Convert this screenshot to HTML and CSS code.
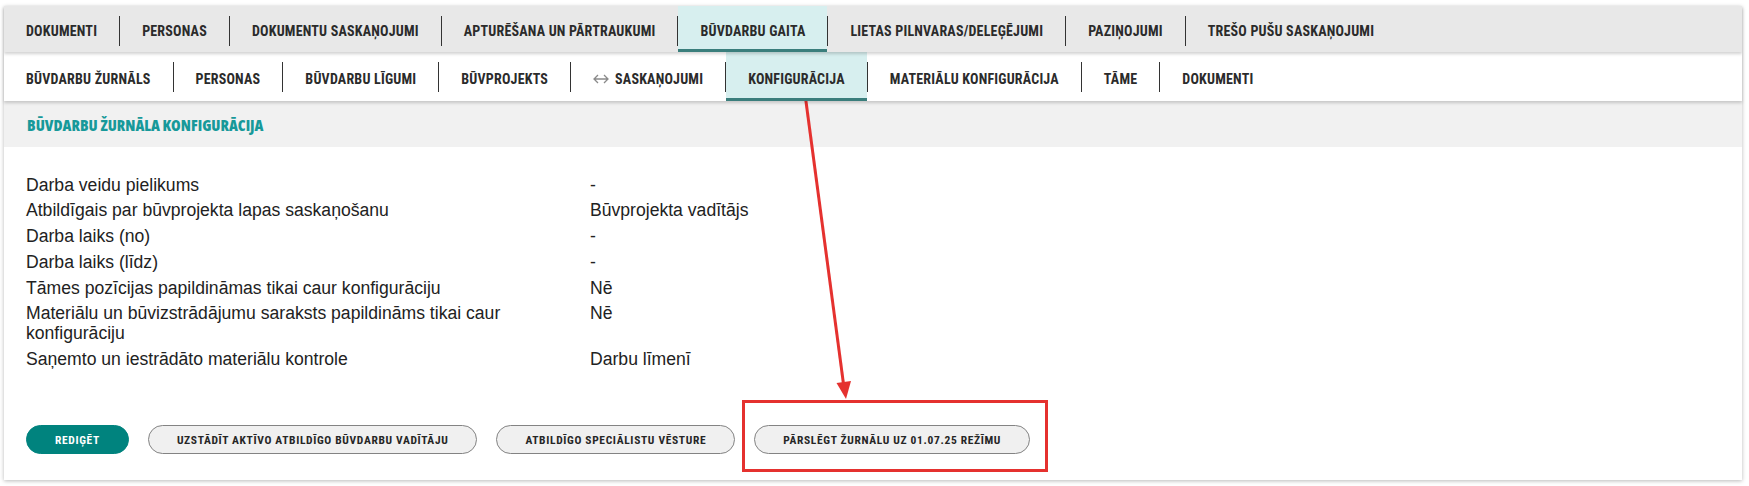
FILE: index.html
```html
<!DOCTYPE html>
<html lang="lv">
<head>
<meta charset="utf-8">
<title>Būvdarbu žurnāla konfigurācija</title>
<link rel="stylesheet" href="styles.css">
</head>
<body>
<div class="page">
  <div class="card">
    <nav class="tabs tabs-main">
      <a class="tab">Dokumenti</a><span class="sep"></span>
      <a class="tab">Personas</a><span class="sep"></span>
      <a class="tab">Dokumentu saskaņojumi</a><span class="sep"></span>
      <a class="tab">Apturēšana un pārtraukumi</a><span class="sep"></span>
      <a class="tab active">Būvdarbu gaita</a><span class="sep"></span>
      <a class="tab">Lietas pilnvaras/deleģējumi</a><span class="sep"></span>
      <a class="tab">Paziņojumi</a><span class="sep"></span>
      <a class="tab">Trešo pušu saskaņojumi</a>
    </nav>
    <nav class="tabs tabs-sub">
      <a class="tab">Būvdarbu žurnāls</a><span class="sep"></span>
      <a class="tab">Personas</a><span class="sep"></span>
      <a class="tab">Būvdarbu līgumi</a><span class="sep"></span>
      <a class="tab">Būvprojekts</a><span class="sep"></span>
      <a class="tab"><svg class="swap" width="16" height="10" viewBox="0 0 16 10" aria-hidden="true"><path d="M1 5H15M5 1L1 5L5 9M11 1L15 5L11 9" fill="none" stroke="#8a8a8a" stroke-width="1.3"/></svg>Saskaņojumi</a><span class="sep"></span>
      <a class="tab active">Konfigurācija</a><span class="sep"></span>
      <a class="tab">Materiālu konfigurācija</a><span class="sep"></span>
      <a class="tab">Tāme</a><span class="sep"></span>
      <a class="tab">Dokumenti</a>
    </nav>
    <h2 class="section-title">Būvdarbu žurnāla konfigurācija</h2>
    <div class="content">
      <dl class="props">
        <dt>Darba veidu pielikums</dt><dd>-</dd>
        <dt>Atbildīgais par būvprojekta lapas saskaņošanu</dt><dd>Būvprojekta vadītājs</dd>
        <dt>Darba laiks (no)</dt><dd>-</dd>
        <dt>Darba laiks (līdz)</dt><dd>-</dd>
        <dt>Tāmes pozīcijas papildināmas tikai caur konfigurāciju</dt><dd>Nē</dd>
        <dt>Materiālu un būvizstrādājumu saraksts papildināms tikai caur konfigurāciju</dt><dd>Nē</dd>
        <dt>Saņemto un iestrādāto materiālu kontrole</dt><dd>Darbu līmenī</dd>
      </dl>
      <div class="actions">
        <button class="btn btn-primary">Rediģēt</button>
        <button class="btn">Uzstādīt aktīvo atbildīgo būvdarbu vadītāju</button>
        <button class="btn">Atbildīgo speciālistu vēsture</button>
        <button class="btn">Pārslēgt žurnālu uz 01.07.25 režīmu</button>
      </div>
    </div>
  </div>
</div>
<svg class="annotation" width="1749" height="486" viewBox="0 0 1749 486" aria-hidden="true">
  <line x1="805" y1="94" x2="843.5" y2="384" stroke="#e5312f" stroke-width="3"/>
  <polygon points="836.5,383 851,381 846,399" fill="#e5312f"/>
  <rect x="743.5" y="401.5" width="303" height="69" fill="none" stroke="#e5312f" stroke-width="3"/>
</svg>
</body>
</html>
```
FILE: styles.css
```css
html, body {
  margin: 0;
  padding: 0;
  background: #fff;
}
body {
  position: relative;
  width: 1749px;
  height: 486px;
  overflow: hidden;
  font-family: "Liberation Sans", Arial, sans-serif;
  color: #222;
}
.page {
  padding: 6px 7px 4px 4px;
}
.card {
  background: #fff;
  box-shadow: 0 1px 4px rgba(0, 0, 0, 0.28);
}

/* ---------- tabs ---------- */
.tabs {
  display: flex;
  align-items: flex-start;
  position: relative;
  font-family: "Roboto", "DejaVu Sans Condensed", sans-serif;
  font-stretch: 75%;
  font-weight: 700;
  font-size: 14px;
  letter-spacing: 0.2px;
  text-transform: uppercase;
  color: #2b2b2b;
}
.tabs-main {
  height: 46px;
  background: #e8e8e8;
  box-shadow: 0 2px 3px rgba(0, 0, 0, 0.18);
  z-index: 3;
}
.tabs-sub {
  height: 49px;
  background: #fff;
  box-shadow: 0 2px 3px rgba(0, 0, 0, 0.18);
  z-index: 2;
}
.tab {
  box-sizing: border-box;
  height: 100%;
  display: flex;
  align-items: center;
  padding: 7px 22px 0;
  border-bottom: 3px solid transparent;
  white-space: nowrap;
  cursor: pointer;
}
.tab.active {
  background: #d7efef;
  border-bottom-color: #3a7e7c;
}
.sep {
  flex: none;
  width: 1px;
  height: 30px;
  margin-top: 10px;
  background: #333;
}
.swap {
  flex: none;
  margin-right: 6px;
}

/* ---------- section title ---------- */
.section-title {
  margin: 0;
  height: 46px;
  box-sizing: border-box;
  padding: 2px 23px 0;
  display: flex;
  align-items: center;
  background: #f1f1f1;
  font-family: "Open Sans", "DejaVu Sans Condensed", sans-serif;
  font-stretch: 75%;
  font-weight: 800;
  font-size: 15.5px;
  letter-spacing: 0;
  text-transform: uppercase;
  color: #17999a;
}

/* ---------- properties ---------- */
.content {
  padding: 25px 22px 26px;
}
.props {
  margin: 0;
  display: grid;
  grid-template-columns: 564px 1fr;
  font-size: 17.6px;
  line-height: 20.2px;
}
.props dt,
.props dd {
  margin: 0;
  padding: 2.75px 0;
}
.props dt {
  padding-right: 15px;
}

/* ---------- buttons ---------- */
.actions {
  display: flex;
  gap: 19px;
  margin-top: 53px;
}
.btn {
  height: 29px;
  box-sizing: border-box;
  padding: 1px 28px 0;
  border: 1px solid #838383;
  border-radius: 15px;
  background: #f0f0f0;
  font-family: "Roboto", "DejaVu Sans Condensed", sans-serif;
  font-stretch: 75%;
  font-weight: 700;
  font-size: 11.5px;
  letter-spacing: 0.65px;
  text-transform: uppercase;
  color: #262626;
  white-space: nowrap;
  cursor: pointer;
}
.btn-primary {
  background: #00837e;
  border-color: #00837e;
  color: #fff;
}

/* ---------- annotation overlay ---------- */
.annotation {
  position: absolute;
  top: 0;
  left: 0;
  pointer-events: none;
}
```
